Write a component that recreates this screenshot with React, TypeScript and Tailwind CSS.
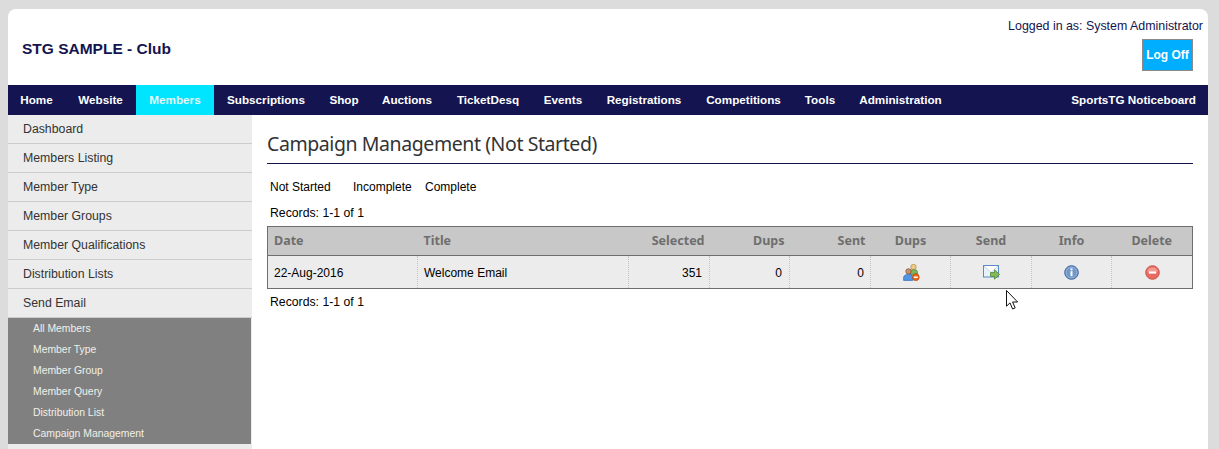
const arial = "font-['Liberation_Sans',Arial,sans-serif]";
const tahoma = "font-['Noto_Sans',Tahoma,sans-serif]";

const navLeft = [
  { t: "Home", w: "w-[57px]" },
  { t: "Website", w: "w-[71px]" },
  { t: "Members", w: "w-[78px]", active: true },
  { t: "Subscriptions", w: "w-[104px]" },
  { t: "Shop", w: "w-[52px]" },
  { t: "Auctions", w: "w-[74px]" },
  { t: "TicketDesq", w: "w-[88px]" },
  { t: "Events", w: "w-[62px]" },
  { t: "Registrations", w: "w-[100px]" },
  { t: "Competitions", w: "w-[99px]" },
  { t: "Tools", w: "w-[54px]" },
  { t: "Administration", w: "w-[107px]" },
];
const side = ["Dashboard", "Members Listing", "Member Type", "Member Groups", "Member Qualifications", "Distribution Lists", "Send Email"];
const sub = ["All Members", "Member Type", "Member Group", "Member Query", "Distribution List", "Campaign Management"];

function DupsIcon() {
  return (
    <svg width="17" height="17" viewBox="0 0 17 17">
      <circle cx="10.5" cy="3" r="2.7" fill="#eecb86" stroke="#b58a3c" strokeWidth="0.7" />
      <path d="M7.5 11V7.5C7.5 6.3 9 5.6 10.8 5.6S14.4 6.3 14.4 7.5V10H11V11Z" fill="#7fb25a" stroke="#55853a" strokeWidth="0.7" />
      <circle cx="5.5" cy="7.4" r="2.7" fill="#c9906a" stroke="#7a4a30" strokeWidth="0.7" />
      <path d="M0.6 16.4V13.6C0.6 11.6 2.6 10.4 5.5 10.4S9.8 11.6 9.8 13.6V16.4Z" fill="#4f96e8" stroke="#3168b5" strokeWidth="0.7" />
      <circle cx="12.8" cy="13.2" r="3.4" fill="#ea6a1c" stroke="#b5450f" strokeWidth="0.7" />
      <rect x="10.8" y="12.5" width="4" height="1.5" fill="#fff" />
    </svg>
  );
}
function SendIcon() {
  return (
    <svg width="17" height="15" viewBox="0 0 17 15">
      <rect x="0.5" y="0.5" width="15" height="11.5" fill="#eaf2fb" stroke="#5b8ac6" />
      <path d="M1 1L8 7.5L15 1" fill="#ffffff" stroke="#b4cce8" strokeWidth="0.8" />
      <path d="M7.5 7.5H11.5V4.8L16.6 9.5L11.5 14.2V11.5H7.5Z" fill="#86b958" stroke="#4f8a34" strokeWidth="0.8" />
    </svg>
  );
}
function InfoIcon() {
  return (
    <svg width="15" height="15" viewBox="0 0 15 15">
      <circle cx="7.5" cy="7.5" r="6.8" fill="#6f97c8" stroke="#3d659f" />
      <circle cx="7.5" cy="7.5" r="5.4" fill="none" stroke="#a5c0e0" strokeWidth="0.7" />
      <rect x="6.5" y="6.2" width="2" height="5" fill="#fff" />
      <rect x="6.5" y="3.4" width="2" height="1.9" fill="#fff" />
    </svg>
  );
}
function DeleteIcon() {
  return (
    <svg width="15" height="15" viewBox="0 0 15 15">
      <circle cx="7.5" cy="7.5" r="6.8" fill="#ea6a62" stroke="#c9544c" />
      <path d="M2 6.5A5.8 5.8 0 0 1 13 6.5Z" fill="#f49a92" />
      <rect x="3.8" y="6.4" width="7.4" height="2.2" fill="#fff" />
    </svg>
  );
}
function Cursor() {
  return (
    <svg width="13" height="20" viewBox="0 0 13 20">
      <path d="M0.5 0.5V16.2L4 12.9L6.6 19L9.2 17.9L6.6 12H11.6Z" fill="#fff" stroke="#111" strokeWidth="1" strokeLinejoin="miter" />
    </svg>
  );
}

const divider = "border-l border-dotted border-l-[#c4c4c4]";

export default function App() {
  return (
    <div className={`relative h-[449px] w-[1219px] overflow-hidden bg-[#dcdcdc] pl-2 pt-[9px] ${arial}`}>
      <div className="h-[440px] w-[1200px] overflow-hidden rounded-t-lg bg-white">
        <header className="flex h-[76px] justify-between">
          <h1 className="pl-[14px] pt-[29px] text-[15.5px] leading-[22px] font-bold text-[#141450]">STG SAMPLE - Club</h1>
          <div className="flex flex-col items-end pr-[5px] pt-[10px]">
            <p className="text-[12.4px] leading-[15px] text-[#141450]">Logged in as: System Administrator</p>
            <button className="mr-[10px] mt-[5px] h-[32px] w-[51px] border border-[#8a8a8a] bg-[#00aeff] text-[12px] font-bold text-white">Log Off</button>
          </div>
        </header>
        <nav className="flex h-[30px] items-center justify-between bg-[#141450] text-[11.7px] font-bold text-white">
          <ul className="flex h-full">
            {navLeft.map((n) => (
              <li key={n.t} className={`flex h-full items-center justify-center ${n.w} ${n.active ? "bg-[#00e5ff] text-[#e8f4f4]" : ""}`}>{n.t}</li>
            ))}
          </ul>
          <span className="pr-3">SportsTG Noticeboard</span>
        </nav>
        <div className="flex">
          <aside className="h-[334px] w-[244px] shrink-0 bg-[#ececec]">
            <ul>
              {side.map((s) => (
                <li key={s} className="flex h-[29px] items-center border-b border-[#cccccc] pl-[15px] text-[12.3px] text-[#333333]">{s}</li>
              ))}
            </ul>
            <ul className="w-[243px] bg-[#808080]">
              {sub.map((s) => (
                <li key={s} className="flex h-[21px] items-center pl-[25px] text-[10.4px] text-[#f0f0e8]">{s}</li>
              ))}
            </ul>
          </aside>
          <main className="flex-1 pl-[15px] pr-[15px]">
            <h2 className={`mt-[14px] h-[35px] border-b border-[#141450] text-[19.5px] leading-[30px] tracking-[-0.42px] text-[#333333] ${tahoma}`}>Campaign Management (Not Started)</h2>
            <div className="mt-[16px] flex pl-[3px] text-[12px] leading-[14px] text-black">
              <span className="w-[83px]">Not Started</span>
              <span className="w-[72px]">Incomplete</span>
              <span>Complete</span>
            </div>
            <p className="mt-[12px] pl-[3px] text-[12.25px] leading-[14px] text-black">Records: 1-1 of 1</p>
            <table className="mt-[6px] w-[926px] table-fixed border-collapse border border-[#6e6e6e] text-[12px]">
              <thead>
                <tr className={`h-[29px] bg-[#c8c8c8] text-[12.5px] font-bold text-[#6e6e6e] ${tahoma}`}>
                  <th className="w-[150px] pl-[6px] pt-[1px] text-left">Date</th>
                  <th className="w-[211px] pl-[6px] pt-[1px] text-left">Title</th>
                  <th className="w-[81px] pr-[5px] pt-[1px] text-right">Selected</th>
                  <th className="w-[80px] pr-[5px] pt-[1px] text-right">Dups</th>
                  <th className="w-[81px] pr-[5px] pt-[1px] text-right">Sent</th>
                  <th className="w-[80px] pt-[1px] text-center">Dups</th>
                  <th className="w-[81px] pt-[1px] text-center">Send</th>
                  <th className="w-[80px] pt-[1px] text-center">Info</th>
                  <th className="pt-[1px] text-center">Delete</th>
                </tr>
              </thead>
              <tbody>
                <tr className="h-[33px] border-t border-[#6e6e6e] bg-[#ececec] text-black">
                  <td className="pl-[6px] pt-[1px]">22-Aug-2016</td>
                  <td className={`pl-[6px] pt-[1px] ${divider}`}>Welcome Email</td>
                  <td className={`pr-[7px] pt-[1px] text-right ${divider}`}>351</td>
                  <td className={`pr-[7px] pt-[1px] text-right ${divider}`}>0</td>
                  <td className={`pr-[6px] pt-[1px] text-right ${divider}`}>0</td>
                  <td className={divider}><div className="flex justify-center pl-[2px]"><DupsIcon /></div></td>
                  <td className={divider}><div className="flex justify-center"><SendIcon /></div></td>
                  <td className={divider}><div className="flex justify-center"><InfoIcon /></div></td>
                  <td className={divider}><div className="flex justify-center"><DeleteIcon /></div></td>
                </tr>
              </tbody>
            </table>
            <p className="mt-[6px] pl-[3px] text-[12.25px] leading-[14px] text-black">Records: 1-1 of 1</p>
          </main>
        </div>
      </div>
      <div className="absolute left-[1006px] top-[290px]"><Cursor /></div>
    </div>
  );
}
